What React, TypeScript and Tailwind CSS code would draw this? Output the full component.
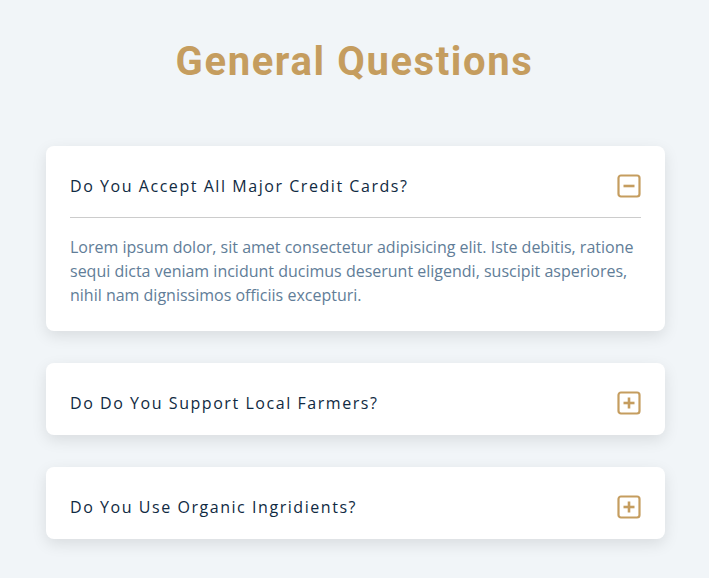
import React, { useState } from "react";

const items = [
  {
    q: "Do You Accept All Major Credit Cards?",
    a: "Lorem ipsum dolor, sit amet consectetur adipisicing elit. Iste debitis, ratione sequi dicta veniam incidunt ducimus deserunt eligendi, suscipit asperiores, nihil nam dignissimos officiis excepturi.",
  },
  {
    q: "Do Do You Support Local Farmers?",
    a: "Lorem ipsum dolor, sit amet consectetur adipisicing elit. Iste debitis, ratione sequi dicta veniam incidunt ducimus deserunt eligendi, suscipit asperiores, nihil nam dignissimos officiis excepturi.",
  },
  {
    q: "Do You Use Organic Ingridients?",
    a: "Lorem ipsum dolor, sit amet consectetur adipisicing elit. Iste debitis, ratione sequi dicta veniam incidunt ducimus deserunt eligendi, suscipit asperiores, nihil nam dignissimos officiis excepturi.",
  },
];

function Icon({ open }: { open: boolean }) {
  return (
    <svg width="24" height="24" viewBox="0 0 24 24" fill="none">
      <rect x="1.5" y="1.5" width="21" height="21" rx="2.5" stroke="#c59d5f" strokeWidth="2.2" />
      <line x1="6.5" y1="12" x2="17.5" y2="12" stroke="#c59d5f" strokeWidth="2.6" />
      {!open && <line x1="12" y1="6.5" x2="12" y2="17.5" stroke="#c59d5f" strokeWidth="2.6" />}
    </svg>
  );
}

export default function App() {
  const [open, setOpen] = useState<number | null>(0);
  return (
    <div className="min-h-[578px] bg-[#f1f5f8] pt-[36px] pb-[40px] font-['Open_Sans',sans-serif]">
      <h2 className="text-center font-['Roboto',sans-serif] font-bold text-[40px] leading-[52px] tracking-[1.6px] text-[#c59d5f]">
        General Questions
      </h2>
      <div className="mt-[58px] ml-[46px] flex w-[619px] flex-col gap-[32px]">
        {items.map((it, i) => (
          <div
            key={i}
            className="rounded-lg bg-white pl-6 pr-[24px] pt-[28px] pb-[20px] shadow-[0_5px_15px_rgba(0,0,0,0.1)]"
          >
            <div className="flex h-6 items-center justify-between">
              <h4 className="text-[16px] leading-6 tracking-[1.55px] text-[#102a42]">{it.q}</h4>
              <button
                className="flex items-center"
                onClick={() => setOpen(open === i ? null : i)}
              >
                <Icon open={open === i} />
              </button>
            </div>
            {open === i && (
              <>
                <div className="mt-[19px] h-px bg-[#cccccc]" />
                <p className="mt-[17px] mb-[4px] text-[16px] leading-6 text-[#617d98]">{it.a}</p>
              </>
            )}
          </div>
        ))}
      </div>
    </div>
  );
}
